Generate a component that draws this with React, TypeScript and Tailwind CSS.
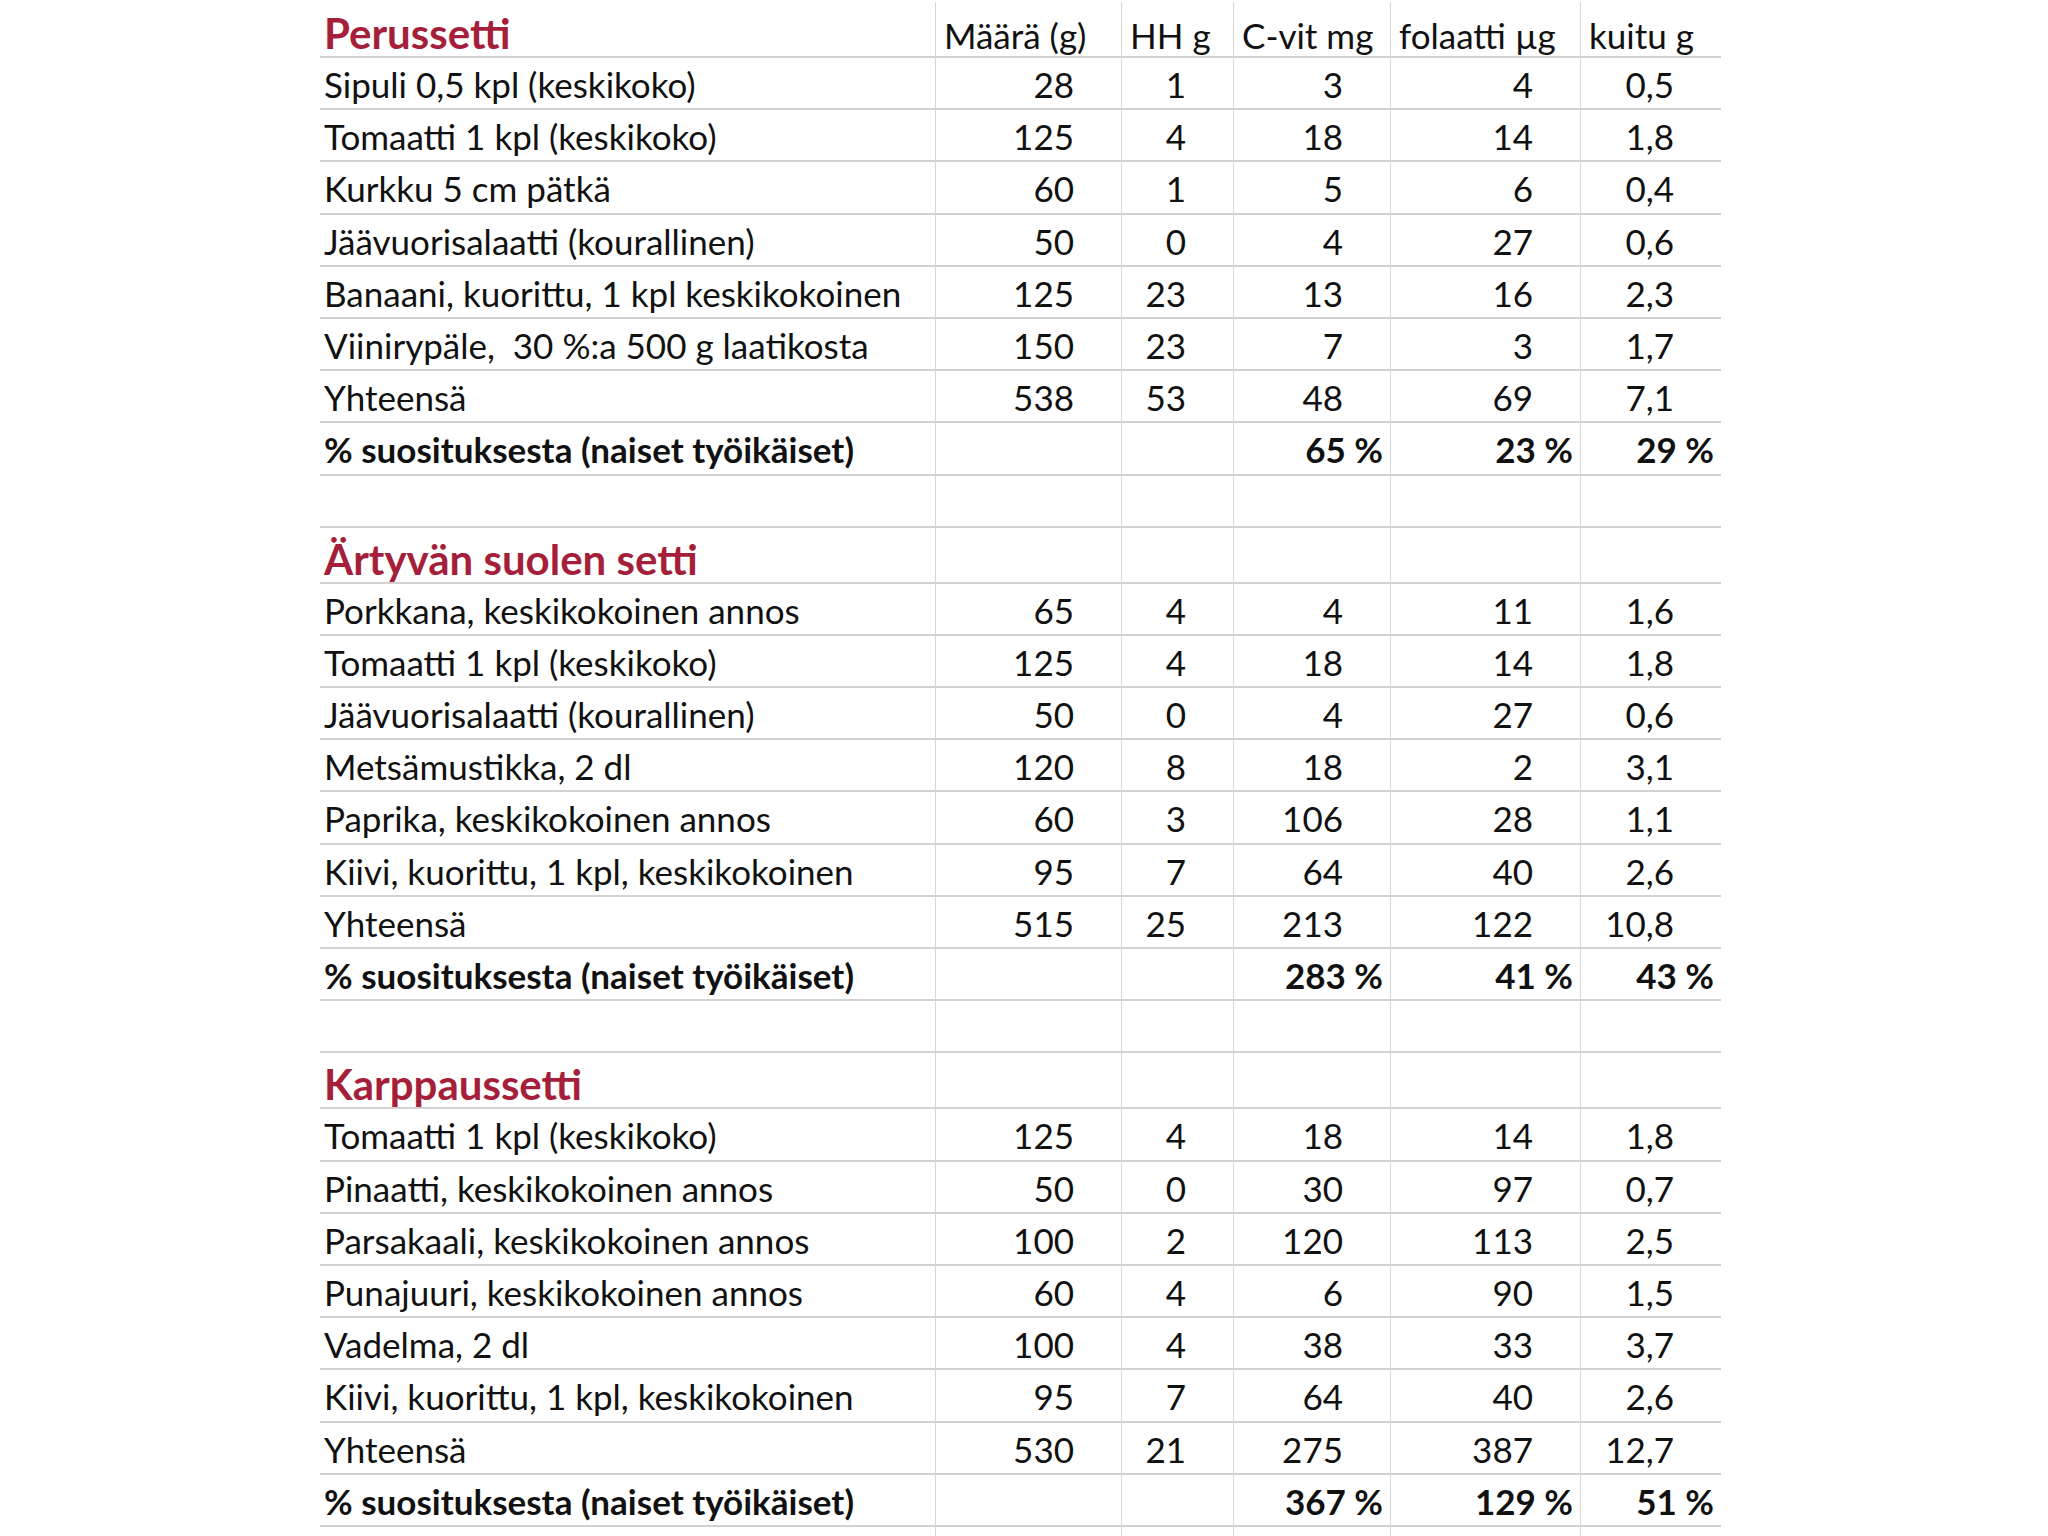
import React from "react";

type Row = { label: string; values: string[]; kind?: "item" | "total" | "pct" };

const columns = ["Määrä (g)", "HH g", "C-vit mg", "folaatti µg", "kuitu g"];

const sections: { title: string; showColumns: boolean; rows: Row[] }[] = [
  {
    title: "Perussetti",
    showColumns: true,
    rows: [
      { label: "Sipuli 0,5 kpl (keskikoko)", values: ["28", "1", "3", "4", "0,5"] },
      { label: "Tomaatti 1 kpl (keskikoko)", values: ["125", "4", "18", "14", "1,8"] },
      { label: "Kurkku 5 cm pätkä", values: ["60", "1", "5", "6", "0,4"] },
      { label: "Jäävuorisalaatti (kourallinen)", values: ["50", "0", "4", "27", "0,6"] },
      { label: "Banaani, kuorittu, 1 kpl keskikokoinen", values: ["125", "23", "13", "16", "2,3"] },
      { label: "Viinirypäle,  30 %:a 500 g laatikosta", values: ["150", "23", "7", "3", "1,7"] },
      { label: "Yhteensä", values: ["538", "53", "48", "69", "7,1"] },
      { label: "% suosituksesta (naiset työikäiset)", values: ["", "", "65 %", "23 %", "29 %"], kind: "pct" },
    ],
  },
  {
    title: "Ärtyvän suolen setti",
    showColumns: false,
    rows: [
      { label: "Porkkana, keskikokoinen annos", values: ["65", "4", "4", "11", "1,6"] },
      { label: "Tomaatti 1 kpl (keskikoko)", values: ["125", "4", "18", "14", "1,8"] },
      { label: "Jäävuorisalaatti (kourallinen)", values: ["50", "0", "4", "27", "0,6"] },
      { label: "Metsämustikka, 2 dl", values: ["120", "8", "18", "2", "3,1"] },
      { label: "Paprika, keskikokoinen annos", values: ["60", "3", "106", "28", "1,1"] },
      { label: "Kiivi, kuorittu, 1 kpl, keskikokoinen", values: ["95", "7", "64", "40", "2,6"] },
      { label: "Yhteensä", values: ["515", "25", "213", "122", "10,8"] },
      { label: "% suosituksesta (naiset työikäiset)", values: ["", "", "283 %", "41 %", "43 %"], kind: "pct" },
    ],
  },
  {
    title: "Karppaussetti",
    showColumns: false,
    rows: [
      { label: "Tomaatti 1 kpl (keskikoko)", values: ["125", "4", "18", "14", "1,8"] },
      { label: "Pinaatti, keskikokoinen annos", values: ["50", "0", "30", "97", "0,7"] },
      { label: "Parsakaali, keskikokoinen annos", values: ["100", "2", "120", "113", "2,5"] },
      { label: "Punajuuri, keskikokoinen annos", values: ["60", "4", "6", "90", "1,5"] },
      { label: "Vadelma, 2 dl", values: ["100", "4", "38", "33", "3,7"] },
      { label: "Kiivi, kuorittu, 1 kpl, keskikokoinen", values: ["95", "7", "64", "40", "2,6"] },
      { label: "Yhteensä", values: ["530", "21", "275", "387", "12,7"] },
      { label: "% suosituksesta (naiset työikäiset)", values: ["", "", "367 %", "129 %", "51 %"], kind: "pct" },
    ],
  },
];

const gridCols = "grid grid-cols-[615px_186px_112px_157px_190px_141px]";
const cell = "border-l border-[#d6d6d6] flex items-center";

function HeaderRow({ title, showColumns }: { title: string; showColumns: boolean }) {
  return (
    <div className={`${gridCols} h-[56px] border-b-2 border-[#d2d2d2]`}>
      <div className="flex items-center pl-[4px] pb-[8px] text-[42px] font-bold text-[#a51f3b]">
        {title}
      </div>
      {columns.map((c) => (
        <div key={c} className={`${cell} pl-[8px] pb-[4px]`}>
          {showColumns ? c : ""}
        </div>
      ))}
    </div>
  );
}

function DataRow({ row }: { row: Row }) {
  const pct = row.kind === "pct";
  return (
    <div className={`${gridCols} h-[52.2px] border-b-2 border-[#d2d2d2] ${pct ? "font-bold" : ""}`}>
      <div className="flex items-center pl-[4px] pb-[3px] whitespace-pre">{row.label}</div>
      {row.values.map((v, i) => (
        <div key={i} className={`${cell} justify-end pb-[3px] ${pct ? "pr-[7px]" : "pr-[47px]"}`}>
          {v}
        </div>
      ))}
    </div>
  );
}

function EmptyRow() {
  return (
    <div className={`${gridCols} h-[52.2px] border-b-2 border-[#d2d2d2]`}>
      <div />
      {columns.map((c) => (
        <div key={c} className={cell} />
      ))}
    </div>
  );
}

export default function App() {
  return (
    <main className="min-h-screen bg-white overflow-hidden">
      <div className="ml-[320px] w-[1401px] pt-[2px] text-[35px] text-[#111111] font-['Lato',sans-serif]">
        {sections.map((s, si) => (
          <div key={s.title}>
            <HeaderRow title={s.title} showColumns={s.showColumns} />
            {s.rows.map((r, ri) => (
              <DataRow key={ri} row={r} />
            ))}
            {si < sections.length - 1 && <EmptyRow />}
          </div>
        ))}
        <div className={`${gridCols} h-[40px]`}>
          <div />
          {columns.map((c) => (
            <div key={c} className={cell} />
          ))}
        </div>
      </div>
    </main>
  );
}
